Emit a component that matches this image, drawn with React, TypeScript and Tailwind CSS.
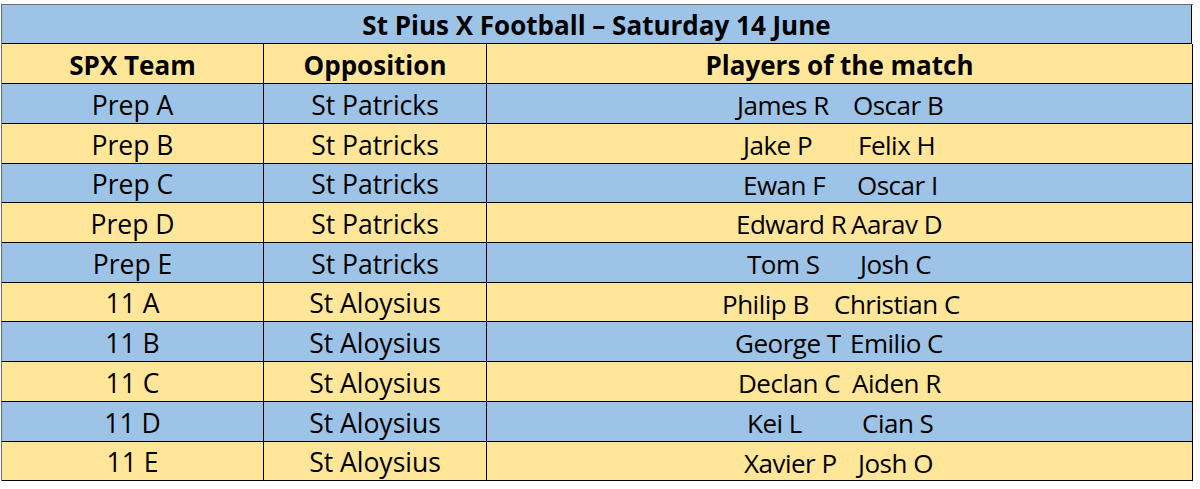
const rows = [
  { team: "Prep A", opp: "St Patricks", p1: "James R", p2: "Oscar B", pos: "ml-[250px] w-[116px]", h: "h-[39px]", bg: "bg-[#9dc3e6]" },
  { team: "Prep B", opp: "St Patricks", p1: "Jake P", p2: "Felix H", pos: "ml-[256px] w-[115px]", h: "h-[39px]", bg: "bg-[#ffe699]" },
  { team: "Prep C", opp: "St Patricks", p1: "Ewan F", p2: "Oscar I", pos: "ml-[256px] w-[114px]", h: "h-[38px]", bg: "bg-[#9dc3e6]" },
  { team: "Prep D", opp: "St Patricks", p1: "Edward R", p2: "Aarav D", pos: "ml-[249px] w-[115px]", h: "h-[39px]", bg: "bg-[#ffe699]" },
  { team: "Prep E", opp: "St Patricks", p1: "Tom S", p2: "Josh C", pos: "ml-[260px] w-[113px]", h: "h-[39px]", bg: "bg-[#9dc3e6]" },
  { team: "11 A", opp: "St Aloysius", p1: "Philip B", p2: "Christian C", pos: "ml-[235px] w-[112px]", h: "h-[38px]", bg: "bg-[#ffe699]" },
  { team: "11 B", opp: "St Aloysius", p1: "George T", p2: "Emilio C", pos: "ml-[248px] w-[115px]", h: "h-[39px]", bg: "bg-[#9dc3e6]" },
  { team: "11 C", opp: "St Aloysius", p1: "Declan C", p2: "Aiden R", pos: "ml-[251px] w-[114px]", h: "h-[39px]", bg: "bg-[#ffe699]" },
  { team: "11 D", opp: "St Aloysius", p1: "Kei L", p2: "Cian S", pos: "ml-[260px] w-[115px]", h: "h-[39px]", bg: "bg-[#9dc3e6]" },
  { team: "11 E", opp: "St Aloysius", p1: "Xavier P", p2: "Josh O", pos: "ml-[257px] w-[114px]", h: "h-[38px]", bg: "bg-[#ffe699]" },
];

const App = () => {
  return (
    <div className="bg-white w-[1200px] h-[489px] pt-[4px] pl-[1px] text-black" style={{ fontFamily: '"Open Sans", "Liberation Sans", sans-serif' }}>
      <div className="w-[1192px] border-t border-l border-[#6b6b6b]">
        <div className="w-[1190px] h-[39px] pt-[3px] flex items-center justify-center bg-[#9dc3e6] border-b border-r border-black text-[26px] font-bold">
          St Pius X Football – Saturday 14 June
        </div>
        <div className="flex h-[40px] bg-[#ffe699] border-b border-black text-[26px] font-bold">
          <div className="w-[262px] pt-[4px] flex items-center justify-center border-r border-black">SPX Team</div>
          <div className="w-[223px] pt-[4px] flex items-center justify-center border-r border-black">Opposition</div>
          <div className="w-[706px] pt-[4px] flex items-center justify-center border-r border-black">Players of the match</div>
        </div>
        {rows.map((r) => (
          <div key={r.team} className={`flex border-b border-black text-[26.5px] ${r.bg} ${r.h} box-content`}>
            <div className="w-[262px] pt-[4px] flex items-center justify-center border-r border-black">{r.team}</div>
            <div className="w-[223px] pt-[4px] flex items-center justify-center border-r border-black">{r.opp}</div>
            <div className="w-[706px] pt-[4px] flex items-center border-r border-black whitespace-nowrap text-[26px] tracking-[-0.5px]">
              <span className={r.pos}>{r.p1}</span>
              <span>{r.p2}</span>
            </div>
          </div>
        ))}
      </div>
    </div>
  );
};

export default App;
